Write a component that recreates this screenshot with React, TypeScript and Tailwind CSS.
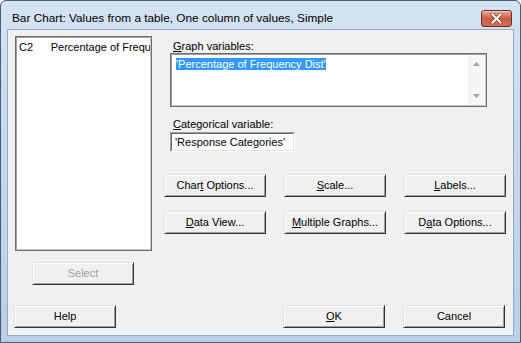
import type { ReactNode } from 'react';

function Btn({ children, className = '', disabled = false }: { children: ReactNode; className?: string; disabled?: boolean }) {
  return (
    <button
      type="button"
      className={`flex h-[23px] w-[102px] shrink-0 items-center justify-center border border-t-[#e3e3e3] border-l-[#e3e3e3] border-r-[#333333] border-b-[#333333] bg-[#f0f0f0] text-[11px] leading-[13px] shadow-[inset_1px_1px_0_#ffffff,inset_-1px_-1px_0_#a0a0a0] ${disabled ? 'text-[#a0a0a0]' : 'text-black'} ${className}`}
    >
      <span className="whitespace-pre">{children}</span>
    </button>
  );
}

function Arrow({ up }: { up?: boolean }) {
  return (
    <svg width="7" height="4" viewBox="0 0 7 4">
      <path d={up ? 'M0 4 L3.5 0 L7 4 Z' : 'M0 0 L3.5 4 L7 0 Z'} fill="#a3a3a3" />
    </svg>
  );
}

export default function App() {
  return (
    <div className="flex h-[343px] w-[521px] flex-col rounded-t-[6px] border border-[#4e5b6b] bg-gradient-to-b from-[#d4e3f4] via-[#c3d7ee] to-[#b9d0ea] px-[6px] pb-[6px] font-['Liberation_Sans',Arial,sans-serif] text-black">
      {/* title bar */}
      <div className="flex h-[28px] shrink-0 items-start justify-between">
        <span className="pl-[5px] pt-[10px] text-[11.8px] leading-[15px]">Bar Chart: Values from a table, One column of values, Simple</span>
        <div className="mr-[2px] mt-[9px] flex h-[17px] w-[31px] items-center justify-center rounded-[3px] border border-[#6e2a20] bg-gradient-to-b from-[#e9a898] via-[#cd5a45] to-[#d26d55] shadow-[inset_0_1px_0_#f2c7bb]">
          <svg width="13" height="11" viewBox="0 0 13 11">
            <path d="M2.5 1.5 L10.5 9.5 M10.5 1.5 L2.5 9.5" stroke="#5b1f16" strokeWidth="3.6" strokeLinecap="square" opacity="0.55" />
            <path d="M2.5 1.5 L10.5 9.5 M10.5 1.5 L2.5 9.5" stroke="#ffffff" strokeWidth="2" strokeLinecap="square" />
          </svg>
        </div>
      </div>

      {/* client area */}
      <div className="flex flex-1 flex-col border border-[#94abc6] bg-[#f0f0f0] text-[11px] leading-[13px]">
        <div className="flex pt-[6px]">
          <div className="ml-[7px] flex w-[137px] flex-col">
            <div className="h-[215px] border border-[#6e6e6e]">
              <div className="h-full border border-t-[#a0a0a0] border-l-[#a0a0a0] border-r-[#c8c8c8] border-b-[#c8c8c8] bg-white pl-[2px] pt-[3px]">
                <div className="flex whitespace-nowrap">
                  <span className="w-[32px]">C2</span>
                  <span className="overflow-hidden">Percentage of Frequ</span>
                </div>
              </div>
            </div>
            <Btn disabled className="ml-[17px] mt-[11px]">Select</Btn>
          </div>

          <div className="ml-[12px] flex flex-col pt-[4px]">
            <span className="ml-[9px]"><u>G</u>raph variables:</span>
            <div className="ml-[6px] h-[54px] w-[317px] border border-[#6e6e6e]">
              <div className="flex h-full border border-t-[#a0a0a0] border-l-[#a0a0a0] border-r-[#c8c8c8] border-b-[#c8c8c8] bg-white">
                <div className="flex-1 pl-[4px] pt-[3px]">
                  <span className="bg-[#3399ff] text-white">'Percentage of Frequency Dist'</span>
                </div>
                <div className="flex w-[17px] flex-col items-center justify-between bg-[#f5f5f5] py-[7px]">
                  <Arrow up />
                  <Arrow />
                </div>
              </div>
            </div>

            <span className="ml-[9px] mt-[11px]"><u>C</u>ategorical variable:</span>
            <div className="ml-[6px] mt-[1px] h-[20px] w-[125px] border border-t-[#a0a0a0] border-l-[#a0a0a0] border-r-[#ffffff] border-b-[#ffffff]">
              <div className="h-full border border-t-[#696969] border-l-[#696969] border-r-[#e3e3e3] border-b-[#e3e3e3] bg-white pl-[3px] pt-[2px]">
                'Response Categories'
              </div>
            </div>

            <div className="mt-[22px] grid grid-cols-[102px_102px_102px] gap-x-[18px] gap-y-[14px]">
              <Btn>Char<u>t</u> Options...</Btn>
              <Btn><u>S</u>cale...</Btn>
              <Btn><u>L</u>abels...</Btn>
              <Btn><u>D</u>ata View...</Btn>
              <Btn><u>M</u>ultiple Graphs...</Btn>
              <Btn>D<u>a</u>ta Options...</Btn>
            </div>
          </div>
        </div>

        <div className="mt-[20px] flex">
          <Btn className="ml-[6px]">Help</Btn>
          <div className="ml-auto mr-[8px] flex gap-[18px]">
            <Btn><u>O</u>K</Btn>
            <Btn>Cancel</Btn>
          </div>
        </div>
      </div>
    </div>
  );
}
